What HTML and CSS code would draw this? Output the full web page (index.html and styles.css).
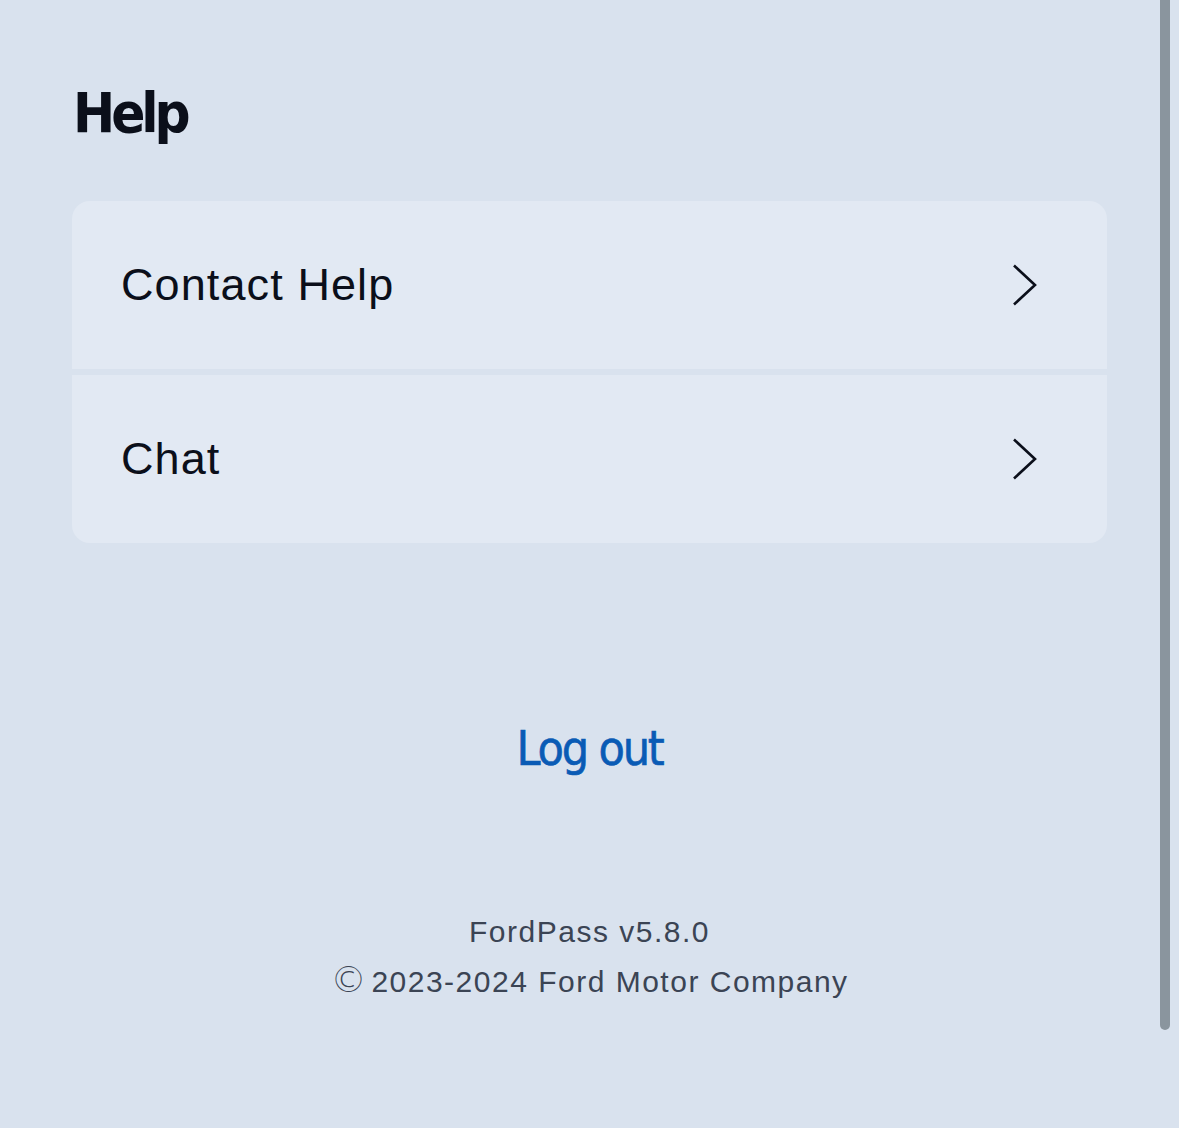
FILE: index.html
```html
<!DOCTYPE html>
<html lang="en">
<head>
<meta charset="utf-8">
<title>Help</title>
<link rel="stylesheet" href="styles.css">
</head>
<body>
<main class="page">
  <h1 class="title">Help</h1>
  <div class="card">
    <a class="row" href="#">
      <span class="row-label">Contact Help</span>
      <svg class="chev" width="26" height="42" viewBox="0 0 26 42"><path d="M2 1.5 L23 21 L2 40.5" fill="none" stroke="#0b0f1a" stroke-width="2.6"/></svg>
    </a>
    <div class="divider"></div>
    <a class="row" href="#">
      <span class="row-label">Chat</span>
      <svg class="chev" width="26" height="42" viewBox="0 0 26 42"><path d="M2 1.5 L23 21 L2 40.5" fill="none" stroke="#0b0f1a" stroke-width="2.6"/></svg>
    </a>
  </div>
  <div class="logout-wrap"><a class="logout" href="#">Log out</a></div>
  <footer class="footer">
    <p>FordPass v5.8.0</p>
    <p><span class="copy">©</span>2023-2024 Ford Motor Company</p>
  </footer>
</main>
<div class="scrollthumb"></div>
</body>
</html>
```
FILE: styles.css
```css
html, body {
  margin: 0;
  padding: 0;
  background: #d9e2ee;
  height: 100%;
}
body {
  font-family: "Liberation Sans", Arial, sans-serif;
  color: #0b0f1a;
  overflow: hidden;
}
.page {
  width: 1035px;
  margin-left: 72px;
  padding-top: 78px;
}
.title {
  margin: 0 0 0 1px;
  font-family: "DejaVu Sans Condensed", "DejaVu Sans", sans-serif;
  font-stretch: condensed;
  font-weight: bold;
  font-size: 56px;
  line-height: 70px;
  letter-spacing: -4px;
  color: #0b0f1a;
}
.card {
  margin-top: 53px;
  background: #e2e9f3;
  border-radius: 18px;
  overflow: hidden;
}
.row {
  display: flex;
  align-items: center;
  justify-content: space-between;
  height: 168px;
  padding: 0 69px 0 49px;
  text-decoration: none;
  color: #0b0f1a;
}
.row-label {
  font-size: 45px;
  letter-spacing: 1.1px;
}
.divider {
  height: 6px;
  background: #d9e2ee;
}
.logout-wrap {
  display: flex;
  justify-content: center;
  margin-top: 175px;
}
.logout {
  font-family: "DejaVu Sans Condensed", "DejaVu Sans", sans-serif;
  font-stretch: condensed;
  font-size: 48px;
  letter-spacing: -2.2px;
  color: #0a5bb5;
  text-decoration: none;
  line-height: 60px;
  -webkit-text-stroke: 0.6px #0a5bb5;
}
.footer {
  margin-top: 130px;
  text-align: center;
  color: #3b4454;
  font-size: 30px;
  line-height: 48px;
  letter-spacing: 1.5px;
}
.footer p {
  margin: 0;
}
.copy {
  font-family: "DejaVu Sans", sans-serif;
  font-weight: 200;
  font-size: 36px;
  letter-spacing: 0;
  margin-right: 5px;
}
.scrollthumb {
  position: absolute;
  left: 1160px;
  top: -10px;
  width: 10px;
  height: 1040px;
  border-radius: 5px;
  background: #8a959e;
}
```
